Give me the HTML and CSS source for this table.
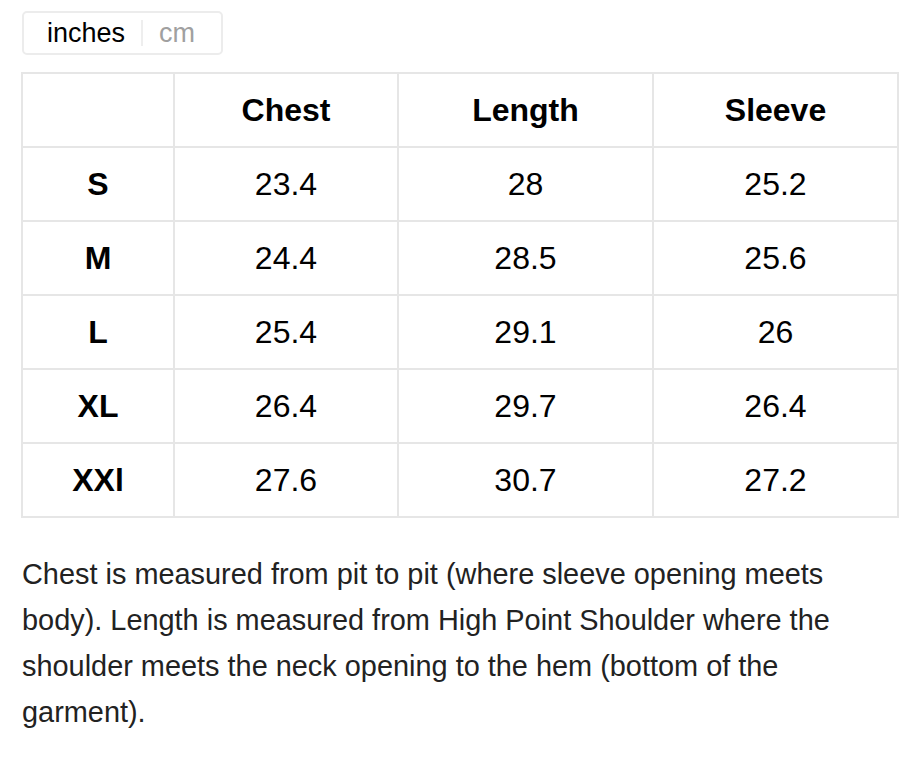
FILE: index.html
```
<!DOCTYPE html>
<html>
<head>
<meta charset="utf-8">
<link rel="stylesheet" href="styles.css">
</head>
<body>
<div class="page">
  <div class="toggle">
    <span class="opt active">inches</span>
    <span class="sep"></span>
    <span class="opt">cm</span>
  </div>
  <table class="sizes">
    <colgroup>
      <col class="c0"><col class="c1"><col class="c2"><col class="c3">
    </colgroup>
    <thead>
      <tr><th></th><th>Chest</th><th>Length</th><th>Sleeve</th></tr>
    </thead>
    <tbody>
      <tr><th>S</th><td>23.4</td><td>28</td><td>25.2</td></tr>
      <tr><th>M</th><td>24.4</td><td>28.5</td><td>25.6</td></tr>
      <tr><th>L</th><td>25.4</td><td>29.1</td><td>26</td></tr>
      <tr><th>XL</th><td>26.4</td><td>29.7</td><td>26.4</td></tr>
      <tr><th>XXl</th><td>27.6</td><td>30.7</td><td>27.2</td></tr>
    </tbody>
  </table>
  <p class="note">Chest is measured from pit to pit (where sleeve opening meets body). Length is measured from High Point Shoulder where the shoulder meets the neck opening to the hem (bottom of the garment).</p>
</div>
</body>
</html>
```
FILE: styles.css
```
html, body {
  margin: 0;
  padding: 0;
  background: #fff;
}
.page {
  padding: 11px 0 0 21px;
  font-family: "Liberation Sans", Arial, sans-serif;
  color: #000;
}
.toggle {
  display: flex;
  align-items: center;
  box-sizing: border-box;
  width: 201px;
  height: 44px;
  margin-left: 1px;
  border: 2px solid #ececec;
  border-radius: 5px;
  font-size: 27px;
}
.opt {
  color: #a0a0a0;
  padding: 0 16px;
}
.opt.active {
  color: #000;
  padding-left: 23px;
}
.sep {
  width: 2px;
  height: 26px;
  background: #eeeeee;
}
.sizes {
  margin-top: 17px;
  border-collapse: collapse;
  table-layout: fixed;
  width: 876px;
  font-size: 32px;
}
.c0 { width: 152px; }
.c1 { width: 224px; }
.c2 { width: 255px; }
.c3 { width: 245px; }
.sizes th, .sizes td {
  border: 2px solid #e6e6e6;
  height: 72px;
  padding: 0;
  text-align: center;
  vertical-align: middle;
}
.sizes th {
  font-weight: bold;
}
.sizes td {
  font-weight: normal;
}
.note {
  width: 860px;
  margin: 33px 0 0 1px;
  font-size: 28.9px;
  line-height: 46px;
  color: #222;
}
```
